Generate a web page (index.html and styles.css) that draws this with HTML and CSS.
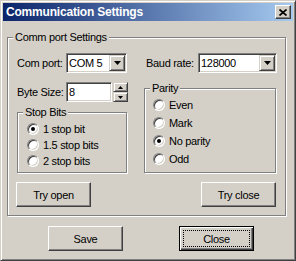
FILE: index.html
```html
<!DOCTYPE html>
<html>
<head>
<meta charset="utf-8">
<link rel="stylesheet" href="styles.css">
</head>
<body>
<div class="window">
  <div class="titlebar">
    <span class="title">Communication Settings</span>
    <span class="xbtn"><svg width="8" height="7" viewBox="0 0 8 7"><path d="M0.5 0.5 L7.5 6.5 M7.5 0.5 L0.5 6.5" stroke="#000" stroke-width="1.7" fill="none"/></svg></span>
  </div>
  <div class="body">
    <div class="group main">
      <span class="legend">Comm port Settings</span>
      <div class="row1">
        <span class="lbl lbl-com">Com port:</span>
        <div class="combo combo-com"><span class="val">COM 5</span><span class="dd"><svg width="7" height="4" viewBox="0 0 7 4"><path d="M0 0 H7 L3.5 4 Z" fill="#000"/></svg></span></div>
        <span class="lbl lbl-baud">Baud rate:</span>
        <div class="combo combo-baud"><span class="val">128000</span><span class="dd"><svg width="7" height="4" viewBox="0 0 7 4"><path d="M0 0 H7 L3.5 4 Z" fill="#000"/></svg></span></div>
      </div>
      <div class="mid">
        <div class="leftcol">
          <div class="row2">
            <span class="lbl lbl-com">Byte Size:</span>
            <div class="edit"><span class="val">8</span></div>
            <div class="spin">
              <span class="sbtn"><svg width="5" height="3" viewBox="0 0 5 3"><path d="M0 3 H5 L2.5 0 Z" fill="#000"/></svg></span>
              <span class="sbtn"><svg width="5" height="3" viewBox="0 0 5 3"><path d="M0 0 H5 L2.5 3 Z" fill="#000"/></svg></span>
            </div>
          </div>
          <div class="group stop">
            <span class="legend">Stop Bits</span>
            <div class="opt"><span class="radio on"></span><span>1 stop bit</span></div>
            <div class="opt"><span class="radio"></span><span>1.5 stop bits</span></div>
            <div class="opt"><span class="radio"></span><span>2 stop bits</span></div>
          </div>
        </div>
        <div class="group parity">
          <span class="legend">Parity</span>
          <div class="opt"><span class="radio"></span><span>Even</span></div>
          <div class="opt"><span class="radio"></span><span>Mark</span></div>
          <div class="opt"><span class="radio on"></span><span>No parity</span></div>
          <div class="opt"><span class="radio"></span><span>Odd</span></div>
        </div>
      </div>
      <div class="btnrow">
        <span class="btn">Try open</span>
        <span class="btn">Try close</span>
      </div>
    </div>
    <div class="footer">
      <span class="btn">Save</span>
      <span class="btn default">Close</span>
    </div>
  </div>
</div>
</body>
</html>
```

FILE: styles.css
```css
* { box-sizing: border-box; }
html, body { margin: 0; padding: 0; }
body {
  background: #d4d0c8;
  font-family: "Liberation Sans", Arial, sans-serif;
  font-size: 11px;
  letter-spacing: -0.3px;
  color: #000;
}
.window {
  width: 296px;
  height: 261px;
  background: #d4d0c8;
  border: 1px solid;
  border-color: #d4d0c8 #404040 #404040 #d4d0c8;
  box-shadow: inset 1px 1px 0 #fff, inset -1px -1px 0 #808080;
  padding: 2px;
}
.titlebar {
  height: 18px;
  background: linear-gradient(to right, #0a246a, #a6caf0);
  display: flex;
  align-items: center;
  justify-content: space-between;
  padding-left: 3px;
  padding-right: 2px;
}
.title {
  color: #fff;
  font-weight: bold;
  font-size: 12px;
  letter-spacing: -0.2px;
  line-height: 14px;
}
.xbtn {
  width: 16px;
  height: 14px;
  background: #d4d0c8;
  border: 1px solid;
  border-color: #fff #404040 #404040 #fff;
  box-shadow: inset -1px -1px 0 #808080;
  display: flex;
  align-items: center;
  justify-content: center;
  padding-right: 1px;
}
.xbtn svg { display: block; }
.body { padding-left: 4px; }
.group {
  position: relative;
  border: 1px solid #808080;
  box-shadow: 1px 1px 0 #fff, inset 1px 1px 0 #fff;
}
.legend {
  position: absolute;
  top: -8px;
  left: 5px;
  padding: 0 2px;
  background: #d4d0c8;
  line-height: 14px;
  white-space: nowrap;
}
.main {
  margin-top: 16px;
  width: 279px;
  height: 179px;
  padding: 15px 0 8px 9px;
}
.row1, .row2 {
  display: flex;
  align-items: center;
  height: 20px;
}
.lbl { white-space: nowrap; }
.lbl-com { width: 49px; }
.lbl-baud { width: 52px; margin-left: 19px; }
.combo, .edit {
  height: 20px;
  background: #fff;
  border: 1px solid;
  border-color: #808080 #fff #fff #808080;
  box-shadow: inset 1px 1px 0 #404040, inset -1px -1px 0 #d4d0c8;
  padding: 1px;
  display: flex;
  align-items: center;
}
.combo-com { width: 61px; }
.combo-baud { width: 79px; }
.val { flex: 1; padding-left: 1px; line-height: 16px; white-space: nowrap; }
.dd {
  width: 16px;
  height: 16px;
  background: #d4d0c8;
  border: 1px solid;
  border-color: #d4d0c8 #404040 #404040 #d4d0c8;
  box-shadow: inset 1px 1px 0 #fff, inset -1px -1px 0 #808080;
  display: flex;
  align-items: center;
  justify-content: center;
}
.dd svg, .sbtn svg { display: block; }
.mid {
  display: flex;
  align-items: flex-start;
  margin-top: 9px;
}
.leftcol { width: 111px; }
.edit { width: 46px; }
.spin {
  margin-left: 1px;
  width: 15px;
  height: 20px;
  display: flex;
  flex-direction: column;
}
.sbtn {
  height: 10px;
  background: #d4d0c8;
  border: 1px solid;
  border-color: #d4d0c8 #404040 #404040 #d4d0c8;
  box-shadow: inset 1px 1px 0 #fff, inset -1px -1px 0 #808080;
  display: flex;
  align-items: center;
  justify-content: center;
}
.stop {
  margin-top: 10px;
  width: 110px;
  height: 61px;
  padding: 8px 0 3px 9px;
}
.parity {
  margin-top: 6px;
  margin-left: 16px;
  width: 132px;
  height: 85px;
  padding: 7px 0 4px 8px;
}
.opt {
  display: flex;
  align-items: center;
  height: 16px;
  white-space: nowrap;
}
.parity .opt { height: 18px; }
.radio {
  width: 12px;
  height: 12px;
  flex: none;
  border-radius: 50%;
  background: #fff;
  border: 1px solid;
  border-color: #808080 #fff #fff #808080;
  box-shadow: inset 1px 1px 0 #404040, inset -1px -1px 0 #d4d0c8;
  margin-right: 4px;
  display: flex;
  align-items: center;
  justify-content: center;
}
.radio.on::after {
  content: "";
  width: 4px;
  height: 4px;
  border-radius: 50%;
  background: #000;
}
.btnrow {
  display: flex;
  justify-content: space-between;
  width: 260px;
  margin-left: -1px;
  margin-top: 9px;
}
.btn {
  width: 75px;
  height: 25px;
  display: flex;
  align-items: center;
  justify-content: center;
  background: #d4d0c8;
  border: 1px solid;
  border-color: #fff #404040 #404040 #fff;
  box-shadow: inset -1px -1px 0 #808080;
  white-space: nowrap;
}
.btn.default {
  border: 1px solid #000;
  box-shadow: inset 1px 1px 0 #fff, inset -1px -1px 0 #404040, inset -2px -2px 0 #808080;
  outline: 1px dotted #000;
  outline-offset: -5px;
}
.footer {
  display: flex;
  gap: 56px;
  padding-left: 41px;
  margin-top: 10px;
}
```
